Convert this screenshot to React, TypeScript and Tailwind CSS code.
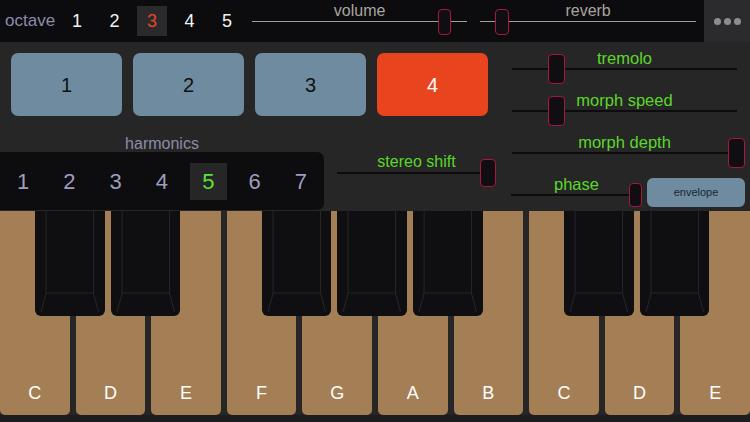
import React from "react";

const font = { fontFamily: '"Liberation Sans", Arial, sans-serif' };

interface SliderProps {
  label: string;
  width: number;
  thumb: number;
  thumbW?: number;
  thumbH?: number;
  labelClass: string;
  lineClass: string;
}

function Slider({ label, width, thumb, thumbW = 17, thumbH = 30, labelClass, lineClass }: SliderProps) {
  return (
    <div className="flex flex-col" style={{ width }}>
      <div className={`h-[16px] text-center leading-[16px] ${labelClass}`}>{label}</div>
      <div className={`relative mt-[2px] ${lineClass}`}>
        <div
          className="absolute top-1/2 -translate-y-1/2 rounded-[4px] border-[1.5px] border-[#a8183e] bg-[#100e12]"
          style={{ left: thumb, width: thumbW, height: thumbH }}
        />
      </div>
    </div>
  );
}

function BlackKey() {
  return (
    <div className="relative h-[105px] w-full rounded-b-[6px] bg-[#0f0e11]">
      <svg className="absolute inset-0" width="100%" height="105" viewBox="0 0 69 105" preserveAspectRatio="none">
        <g stroke="#27252a" strokeWidth="1" fill="none">
          <path d="M11 0 V82 H58 V0" />
          <path d="M11 82 L6 101" />
          <path d="M58 82 L63 101" />
        </g>
      </svg>
    </div>
  );
}

export default function App() {
  const whites = ["C", "D", "E", "F", "G", "A", "B", "C", "D", "E"];
  const blacks = [true, true, false, true, true, true, false, true, true, false];

  return (
    <div className="h-[422px] w-[750px] overflow-hidden bg-[#262626]" style={font}>
      {/* top bar */}
      <div className="flex h-[42px] items-center bg-[#0c0b0e]">
        <span className="pl-[5px] text-[17px] text-[#8d8ca9]">octave</span>
        <div className="ml-[7px] flex gap-[7.5px]">
          {[1, 2, 3, 4, 5].map((n) => (
            <div
              key={n}
              className={`flex h-[30px] w-[30px] items-center justify-center text-[18px] ${
                n === 3 ? "bg-[#2a292c] text-[#e2482a]" : "text-[#f2f2f2]"
              }`}
            >
              {n}
            </div>
          ))}
        </div>
        <div className="ml-[10px] self-start pt-[3px]">
          <Slider
            label="volume"
            width={215}
            thumb={186}
            thumbW={13}
            thumbH={26}
            labelClass="text-[16px] text-[#a9a59f]"
            lineClass="h-px bg-[#a19e98]"
          />
        </div>
        <div className="ml-[13px] self-start pt-[3px]">
          <Slider
            label="reverb"
            width={216}
            thumb={15}
            thumbW={14}
            thumbH={26}
            labelClass="text-[16px] text-[#a9a59f]"
            lineClass="h-px bg-[#a19e98]"
          />
        </div>
        <div className="ml-auto flex h-full w-[46px] items-center justify-center gap-[3px] bg-[#2b2a2d]">
          <span className="h-[7px] w-[7px] rounded-full bg-[#8e8c90]" />
          <span className="h-[7px] w-[7px] rounded-full bg-[#8e8c90]" />
          <span className="h-[7px] w-[7px] rounded-full bg-[#8e8c90]" />
        </div>
      </div>

      {/* controls */}
      <div className="flex h-[169px]">
        <div className="w-[500px]">
          <div className="flex gap-[11px] pl-[11px] pt-[11px]">
            {[1, 2, 3, 4].map((n) => (
              <div
                key={n}
                className={`flex h-[63px] w-[111px] items-center justify-center rounded-[7px] text-[20px] ${
                  n === 4 ? "bg-[#e8441e] text-white" : "bg-[#6e8ba0] text-[#111]"
                }`}
              >
                {n}
              </div>
            ))}
          </div>
          <div className="mt-[19px] flex">
            <div className="w-[324px]">
              <div className="h-[17px] pt-px text-center text-[16px] leading-[16px] text-[#8d8ca9]">harmonics</div>
              <div className="grid h-[58px] grid-cols-7 items-center rounded-r-[7px] bg-[#0d0c0f]">
                {[1, 2, 3, 4, 5, 6, 7].map((n) => (
                  <div key={n} className="flex justify-center">
                    <div
                      className={`flex h-[37px] w-[37px] items-center justify-center text-[22px] ${
                        n === 5 ? "bg-[#262626] text-[#5fe03a]" : "text-[#9d9dbd]"
                      }`}
                    >
                      {n}
                    </div>
                  </div>
                ))}
              </div>
            </div>
            <div className="ml-[13px] pt-[19px]">
              <Slider
                label="stereo shift"
                width={159}
                thumb={143}
                thumbW={16}
                thumbH={28}
                labelClass="text-[16px] text-[#5cd62b]"
                lineClass="h-[1.5px] bg-[#0c0c0c]"
              />
            </div>
          </div>
        </div>

        <div className="flex flex-1 flex-col pl-[12px] pt-[8px]">
          <div className="h-[42px]">
            <Slider label="tremolo" width={225} thumb={36} labelClass="text-[16.5px] text-[#5cd62b]" lineClass="h-[1.5px] bg-[#0c0c0c]" />
          </div>
          <div className="h-[42px]">
            <Slider label="morph speed" width={225} thumb={36} labelClass="text-[16.5px] text-[#5cd62b]" lineClass="h-[1.5px] bg-[#0c0c0c]" />
          </div>
          <div className="h-[42px]">
            <Slider label="morph depth" width={225} thumb={216} labelClass="text-[16.5px] text-[#5cd62b]" lineClass="h-[1.5px] bg-[#0c0c0c]" />
          </div>
          <div className="-ml-px flex items-start">
            <Slider
              label="phase"
              width={131}
              thumb={118}
              thumbW={13}
              thumbH={24}
              labelClass="text-[16.5px] text-[#5cd62b]"
              lineClass="h-[1.5px] bg-[#0c0c0c]"
            />
            <div className="ml-[5px] mt-[2px] flex h-[29px] w-[98px] items-center justify-center rounded-[6px] bg-[#6e8ba0] text-[11px] text-[#1c2630]">
              envelope
            </div>
          </div>
        </div>
      </div>

      {/* keyboard */}
      <div className="relative h-[211px] bg-[#1d1d1f]">
        <div className="flex h-[204px] gap-[6px] bg-[#262626]">
          {whites.map((k, i) => (
            <div
              key={i}
              className="flex flex-1 items-end justify-center rounded-b-[5px] bg-[#a47f55] pb-[8px] text-[18px] text-white"
            >
              {k}
            </div>
          ))}
        </div>
        <div className="absolute inset-x-0 top-0 flex gap-[6px] pl-[35px]">
          {blacks.map((b, i) => (
            <div key={i} className="w-[69.6px] shrink-0">
              {b && <BlackKey />}
            </div>
          ))}
        </div>
      </div>
    </div>
  );
}
